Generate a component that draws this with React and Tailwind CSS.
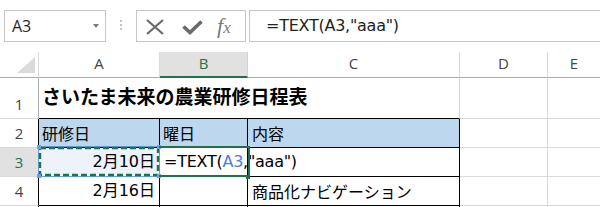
import React from "react";

const cellFont = "font-['DejaVu_Sans','Noto_Sans_CJK_JP',sans-serif]";
const jpFont = "font-['Noto_Sans_CJK_JP',sans-serif]";

const HeaderCol = ({ label, active, last }) => (
  <div
    className={
      "flex items-center justify-center text-[15px] " +
      (active
        ? "border-b-2 border-b-[#217346] bg-[#e1e1e1] text-[#217346] border-r border-r-[#d4d4d4]"
        : "border-b border-b-[#ababab] text-[#444] " + (last ? "" : "border-r border-r-[#d9d9d9]"))
    }
  >
    <span className="-mt-[2px]">{label}</span>
  </div>
);

const RowHead = ({ n, cls = "", tone = "border-r-[#ababab]" }) => (
  <div className={"flex items-center justify-center border-b border-b-[#d9d9d9] border-r text-[15px] text-[#444] " + tone + " " + cls}>
    {n}
  </div>
);

export default function App() {
  return (
    <div className="h-[207px] w-[600px] overflow-hidden bg-white font-['Open_Sans',sans-serif] text-[#444]">
      {/* name box + formula bar */}
      <div className="flex h-[52px] items-start pt-[10px]">
        <div className="ml-[4px] flex h-[32px] w-[102px] items-center justify-between border border-[#c6c6c6] pl-[7px] pr-[6px]">
          <span className="text-[16px] text-[#262626]">A3</span>
          <span className="h-0 w-0 border-x-[3px] border-t-[4px] border-x-transparent border-t-[#7a7a7a]" />
        </div>
        <div className="ml-[14px] mt-[10px] flex flex-col gap-[2px]">
          <span className="h-[2px] w-[2px] bg-[#c4c4c4]" />
          <span className="h-[2px] w-[2px] bg-[#c4c4c4]" />
          <span className="h-[2px] w-[2px] bg-[#c4c4c4]" />
        </div>
        <div className="ml-[14px] flex h-[32px] w-[110px] items-center border border-[#c6c6c6] pl-[9px]">
          <svg width="18" height="16" viewBox="0 0 18 16" className="mt-[2px]">
            <path d="M1 1 L17 15 M17 1 L1 15" stroke="#6a6a6a" strokeWidth="2.2" fill="none" />
          </svg>
          <svg width="21" height="15" viewBox="0 0 21 15" className="ml-[18px] mt-[3px]">
            <polyline points="1.5,6.5 8,12.5 19.5,1.5" stroke="#6a6a6a" strokeWidth="3.6" fill="none" />
          </svg>
          <span className="ml-[14px] font-['Liberation_Serif',serif] text-[22px] italic leading-none text-[#7a7a7a]">
            f<span className="text-[17px]">x</span>
          </span>
        </div>
        <div className={"ml-[3px] flex h-[32px] flex-1 items-center border-y border-l border-[#c6c6c6] pl-[16px] text-[16px] tracking-[-0.25px] text-[#222] " + cellFont}>
          =TEXT(A3,"aaa")
        </div>
      </div>

      {/* sheet */}
      <div className="grid grid-cols-[39px_121px_88px_212px_88px_1fr] grid-rows-[26px_41px_29px_29px_29px_30px]">
        {/* header row */}
        <div className="relative border-b border-r border-b-[#ababab] border-r-[#d9d9d9]">
          <svg width="38" height="25" className="absolute left-0 top-0">
            <polygon points="17,21 35,21 35,5" fill="#dadada" />
          </svg>
        </div>
        <HeaderCol label="A" />
        <HeaderCol label="B" active />
        <HeaderCol label="C" />
        <HeaderCol label="D" />
        <HeaderCol label="E" last />

        {/* row 1 */}
        <RowHead n="1" cls="items-end pb-[3px]" />
        <div className={"relative flex items-center border-b border-b-black pb-[3px] pl-[3px] " + jpFont}>
          <span className="whitespace-nowrap text-[19px] font-bold text-black">さいたま未来の農業研修日程表</span>
        </div>
        <div className="border-b border-b-black" />
        <div className="border-b border-r border-b-black border-r-[#d9d9d9]" />
        <div className="border-b border-r border-[#d9d9d9]" />
        <div className="border-b border-[#d9d9d9]" />

        {/* row 2 */}
        <RowHead n="2" tone="border-r-black" />
        <div className={"flex items-center border-b border-r border-black bg-[#bdd7ee] pl-[3px] text-[16px] text-black " + jpFont}>研修日</div>
        <div className={"flex items-center border-b border-r border-black bg-[#bdd7ee] pl-[3px] text-[16px] text-black " + jpFont}>曜日</div>
        <div className={"flex items-center border-b border-r border-black bg-[#bdd7ee] pl-[4px] text-[16px] text-black " + jpFont}>内容</div>
        <div className="border-b border-r border-[#d9d9d9]" />
        <div className="border-b border-[#d9d9d9]" />

        {/* row 3 */}
        <RowHead n="3" cls="bg-[#e1e1e1] text-[#217346]" tone="border-r-[#217346]" />
        <div className={"relative flex items-center justify-end border-b border-r border-black bg-[#edf2fb] pr-[4px] text-[16px] text-black " + cellFont}>
          2月10日
          <div className="pointer-events-none absolute -left-[1px] -top-[2px] z-10 h-[31px] w-[122px]">
            <svg width="122" height="31" className="absolute left-0 top-0">
              <rect x="0.5" y="0.5" width="121" height="30" fill="none" stroke="#6d9eeb" strokeWidth="1" />
              <rect x="2" y="2" width="118" height="27" fill="none" stroke="#217346" strokeWidth="2.4" strokeDasharray="6 3" />
            </svg>
            <span className="absolute -left-[1px] -top-[1px] h-[4px] w-[4px] bg-[#6d9eeb]" />
            <span className="absolute -right-[1px] -top-[1px] h-[4px] w-[4px] bg-[#6d9eeb]" />
            <span className="absolute -bottom-[1px] -left-[1px] h-[4px] w-[4px] bg-[#6d9eeb]" />
            <span className="absolute -bottom-[1px] -right-[1px] h-[4px] w-[4px] bg-[#6d9eeb]" />
          </div>
        </div>
        <div className={"relative flex items-center border-b border-r border-black pl-[4px] text-[16px] tracking-[-0.25px] text-black " + cellFont}>
          <span className="whitespace-nowrap">
            =TEXT(<span className="text-[#4a7fd9]">A3</span>,"aaa")
          </span>
          <div className="pointer-events-none absolute -left-[1px] -top-[2px] z-20 h-[31px] w-[91px] border-2 border-l-0 border-[#217346]" />
          <span className="absolute -bottom-[3px] -right-[3px] z-20 h-[4px] w-[4px] bg-[#217346]" />
        </div>
        <div className="border-b border-r border-black" />
        <div className="border-b border-r border-[#d9d9d9]" />
        <div className="border-b border-[#d9d9d9]" />

        {/* row 4 */}
        <RowHead n="4" tone="border-r-black" />
        <div className={"flex items-center justify-end border-b border-r border-black pr-[4px] text-[16px] text-black " + cellFont}>2月16日</div>
        <div className="border-b border-r border-black" />
        <div className={"flex items-center border-b border-r border-black pl-[4px] text-[16px] text-black " + jpFont}>商品化ナビゲーション</div>
        <div className="border-b border-r border-[#d9d9d9]" />
        <div className="border-b border-[#d9d9d9]" />

        {/* row 5, only its top edge is in view */}
        <div className="border-r border-black" />
        <div className="border-r border-black" />
        <div className="border-r border-black" />
        <div className="border-r border-black" />
        <div className="border-r border-[#d9d9d9]" />
        <div />
      </div>
    </div>
  );
}
